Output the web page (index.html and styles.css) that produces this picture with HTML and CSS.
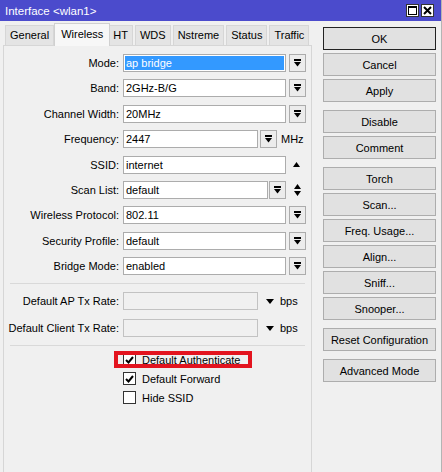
FILE: index.html
```html
<!DOCTYPE html>
<html lang="en">
 <head>
  <meta charset="UTF-8" />
  <meta name="viewport" content="width=device-width, initial-scale=1.0" />
  <title>Interface &lt;wlan1&gt;</title>
  <link rel="stylesheet" href="styles.css">
 </head>
 <body>
  <div class="window">
   <!-- title bar -->
   <div class="titlebar">
    <span class="title">Interface &lt;wlan1&gt;</span>
    <div class="title-btns">
     <span class="tb-btn">
      <svg width="9" height="9" viewBox="0 0 9 9"><rect x="0.5" y="0.5" width="8" height="8" fill="none" stroke="#000" stroke-width="1"/><rect x="0" y="0" width="9" height="2" fill="#000"/></svg>
     </span>
     <span class="tb-btn">
      <svg width="9" height="9" viewBox="0 0 9 9"><path d="M1 1L8 8M8 1L1 8" stroke="#000" stroke-width="2"/></svg>
     </span>
    </div>
   </div>

   <div class="main">
    <!-- tabs -->
    <div class="tabs-area">
     <ul class="tabs">
      <li>General</li>
      <li class="active">Wireless</li>
      <li>HT</li>
      <li>WDS</li>
      <li>Nstreme</li>
      <li>Status</li>
      <li>Traffic</li>
     </ul>

     <div class="panel">
      <div class="form">
       <div class="row">
        <label>Mode:</label>
        <div class="field focus"><span class="sel">ap bridge</span></div>
        <span class="dd"><svg width="7" height="8" viewBox="0 0 7 8"><rect width="7" height="2"/><path d="M0 3h7l-3.5 4.5z"/></svg></span>
       </div>
       <div class="row">
        <label>Band:</label>
        <div class="field">2GHz-B/G</div>
        <span class="dd"><svg width="7" height="8" viewBox="0 0 7 8"><rect width="7" height="2"/><path d="M0 3h7l-3.5 4.5z"/></svg></span>
       </div>
       <div class="row">
        <label>Channel Width:</label>
        <div class="field">20MHz</div>
        <span class="dd"><svg width="7" height="8" viewBox="0 0 7 8"><rect width="7" height="2"/><path d="M0 3h7l-3.5 4.5z"/></svg></span>
       </div>
       <div class="row">
        <label>Frequency:</label>
        <div class="field short">2447</div>
        <span class="dd dd-gap"><svg width="7" height="8" viewBox="0 0 7 8"><rect width="7" height="2"/><path d="M0 3h7l-3.5 4.5z"/></svg></span>
        <span class="unit">MHz</span>
       </div>
       <div class="row">
        <label>SSID:</label>
        <div class="field">internet</div>
        <span class="arrows"><svg width="7" height="5" viewBox="0 0 7 5"><path d="M0 5h7L3.5 0z"/></svg></span>
       </div>
       <div class="row">
        <label>Scan List:</label>
        <div class="field mid">default</div>
        <span class="dd dd-tight"><svg width="7" height="8" viewBox="0 0 7 8"><rect width="7" height="2"/><path d="M0 3h7l-3.5 4.5z"/></svg></span>
        <span class="arrows arrows-tight"><svg width="7" height="12" viewBox="0 0 7 12"><path d="M0 5h7L3.5 0zM0 7h7l-3.5 5z"/></svg></span>
       </div>
       <div class="row">
        <label>Wireless Protocol:</label>
        <div class="field">802.11</div>
        <span class="dd"><svg width="7" height="8" viewBox="0 0 7 8"><rect width="7" height="2"/><path d="M0 3h7l-3.5 4.5z"/></svg></span>
       </div>
       <div class="row">
        <label>Security Profile:</label>
        <div class="field">default</div>
        <span class="dd"><svg width="7" height="8" viewBox="0 0 7 8"><rect width="7" height="2"/><path d="M0 3h7l-3.5 4.5z"/></svg></span>
       </div>
       <div class="row">
        <label>Bridge Mode:</label>
        <div class="field">enabled</div>
        <span class="dd"><svg width="7" height="8" viewBox="0 0 7 8"><rect width="7" height="2"/><path d="M0 3h7l-3.5 4.5z"/></svg></span>
       </div>
      </div>

      <div class="sep"></div>

      <div class="form rates">
       <div class="row">
        <label>Default AP Tx Rate:</label>
        <div class="field short disabled"></div>
        <span class="down"><svg width="8" height="5" viewBox="0 0 8 5"><path d="M0 0h8L4 5z"/></svg></span>
        <span class="unit">bps</span>
       </div>
       <div class="row">
        <label>Default Client Tx Rate:</label>
        <div class="field short disabled"></div>
        <span class="down"><svg width="8" height="5" viewBox="0 0 8 5"><path d="M0 0h8L4 5z"/></svg></span>
        <span class="unit">bps</span>
       </div>
      </div>

      <div class="sep sep-last"></div>

      <div class="checks">
       <div class="check marked">
        <span class="box on"><svg width="9" height="8" viewBox="0 0 9 8"><path d="M1 4l2.5 2.5L8 1" fill="none" stroke="#000" stroke-width="2"/></svg></span>
        Default Authenticate
        <span class="mark"></span>
       </div>
       <div class="check">
        <span class="box on"><svg width="9" height="8" viewBox="0 0 9 8"><path d="M1 4l2.5 2.5L8 1" fill="none" stroke="#000" stroke-width="2"/></svg></span>
        Default Forward
       </div>
       <div class="check">
        <span class="box"></span>
        Hide SSID
       </div>
      </div>
     </div>
    </div>

    <!-- buttons -->
    <div class="actions">
     <button class="btn default">OK</button>
     <button class="btn">Cancel</button>
     <button class="btn">Apply</button>
     <button class="btn group">Disable</button>
     <button class="btn">Comment</button>
     <button class="btn group">Torch</button>
     <button class="btn">Scan...</button>
     <button class="btn">Freq. Usage...</button>
     <button class="btn">Align...</button>
     <button class="btn">Sniff...</button>
     <button class="btn">Snooper...</button>
     <button class="btn group">Reset Configuration</button>
     <button class="btn group">Advanced Mode</button>
    </div>
   </div>
  </div>
 </body>
</html>
```

FILE: styles.css
```css
* {
 margin: 0;
 padding: 0;
 box-sizing: border-box;
}
body {
 background-color: #f0f0f0;
 font: 11px "Liberation Sans", Arial, sans-serif;
 color: #000;
 overflow: hidden;
}
.window {
 width: 442px;
 height: 472px;
 border-right: 1px solid #b4b4b4;
 display: flex;
 flex-direction: column;
}
.titlebar {
 height: 21px;
 flex-shrink: 0;
 background-color: #4b4bcc;
 display: flex;
 align-items: center;
 justify-content: space-between;
 padding: 0 7px 0 5px;
}
.title {
 color: #fff;
 font-size: 11.5px;
}
.title-btns {
 display: flex;
 gap: 2px;
}
.tb-btn {
 width: 13px;
 height: 13px;
 background-color: #fff;
 border: 1px solid #333;
 display: flex;
 align-items: center;
 justify-content: center;
}
.main {
 flex: 1;
 display: flex;
 min-height: 0;
}
.tabs-area {
 width: 312px;
 padding-left: 3px;
 display: flex;
 flex-direction: column;
}
.tabs {
 list-style: none;
 display: flex;
 align-items: flex-end;
 height: 24px;
 flex-shrink: 0;
 padding-left: 2px;
}
.tabs li {
 height: 20px;
 line-height: 18px;
 padding: 0 4px;
 margin-right: 2px;
 background-color: #e4e4e4;
 border: 1px solid #d6d6d6;
 border-bottom: 0;
}
.tabs li.active {
 height: 23px;
 line-height: 20px;
 margin: 0 0 -1px -2px;
 padding: 0 6px;
 background-color: #f7f7f7;
 border-color: #d0d0d0;
 position: relative;
 z-index: 1;
}
.tabs li.active + li {
 margin-left: -2px;
}
.panel {
 flex: 1;
 border: 1px solid #d6d6d6;
 border-bottom: 0;
 padding-top: 8px;
}
.form {
 display: flex;
 flex-direction: column;
 gap: 7.4px;
}
.row {
 display: flex;
 align-items: center;
 height: 18px;
}
.row label {
 width: 115px;
 text-align: right;
 margin-right: 4px;
 white-space: nowrap;
}
.field {
 width: 163px;
 height: 18px;
 background-color: #fff;
 border: 1px solid #acacac;
 padding: 1px 2px;
 line-height: 14px;
}
.field.short {
 width: 135px;
}
.field.mid {
 width: 145px;
}
.field.disabled {
 background-color: #f0f0f0;
 border-color: #c2c2c2;
}
.field.focus {
 padding: 1px;
}
.sel {
 display: block;
 height: 14px;
 background-color: #3399ff;
 color: #fff;
 padding-left: 1px;
}
.dd {
 width: 17px;
 height: 18px;
 margin-left: 3px;
 border: 1px solid #acacac;
 background-color: #ececec;
 display: flex;
 align-items: center;
 justify-content: center;
}
.dd-gap {
 margin-left: 2px;
}
.dd-tight {
 margin-left: 1px;
}
.arrows {
 margin-left: 7px;
 display: flex;
 align-items: center;
}
.arrows-tight {
 margin-left: 8px;
}
.unit {
 margin-left: 4px;
}
.down {
 margin-left: 8px;
 display: flex;
 align-items: center;
}
.down + .unit {
 margin-left: 6px;
}
.sep {
 height: 1px;
 background-color: #d9d9d9;
 margin: 8px 6px 8px 6px;
}
.sep-last {
 margin-bottom: 4px;
}
.rates {
 gap: 9px;
}
.checks {
 padding-left: 119px;
}
.check {
 display: flex;
 align-items: center;
 height: 19px;
 gap: 6px;
 position: relative;
}
.box {
 width: 13px;
 height: 13px;
 background-color: #fff;
 border: 1px solid #333;
 display: flex;
 align-items: center;
 justify-content: center;
}
/* red highlight frame drawn over the first option */
.mark {
 position: absolute;
 left: -9px;
 top: 1px;
 width: 138px;
 height: 17px;
 border: 4px solid #e3141f;
}
.actions {
 width: 113px;
 margin: 6px 0 0 11px;
 display: flex;
 flex-direction: column;
 gap: 3px;
}
.btn {
 height: 23px;
 flex-shrink: 0;
 font: inherit;
 color: #000;
 background-color: #e1e1e1;
 border: 1px solid #adadad;
}
.btn.default {
 border-color: #222;
}
.btn.group {
 margin-top: 5px;
}
```
